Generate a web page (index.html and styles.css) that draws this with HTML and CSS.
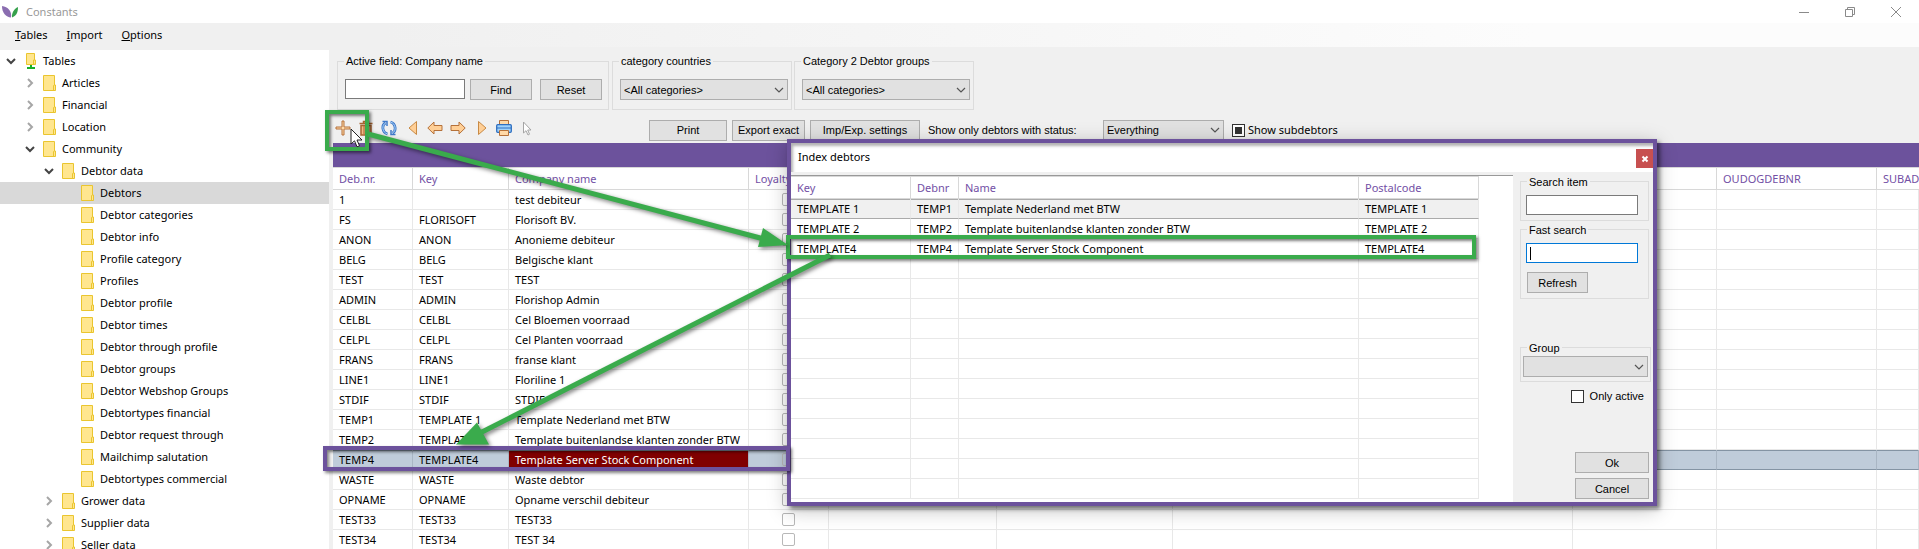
FILE: index.html
```html
<!DOCTYPE html>
<html lang="en">
<head>
<meta charset="utf-8">
<title>Constants</title>
<link rel="stylesheet" href="styles.css">
</head>
<body>
<svg class="defs" aria-hidden="true">
  <symbol id="folder" viewBox="0 0 13 16"><path d="M.5.5h11v9.5h1v5.5H.5z" fill="#ffe68f" stroke="#eac52f"/><path d="M10.5 15v-4.5l1.5-1" fill="none" stroke="#eac52f"/></symbol>
  <symbol id="open" viewBox="0 0 10 10"><path d="M1 3l4 4 4-4" fill="none" stroke="#444" stroke-width="2"/></symbol>
  <symbol id="shut" viewBox="0 0 10 10"><path d="M3 1l4 4-4 4" fill="none" stroke="#a6a6a6" stroke-width="2"/></symbol>
  <symbol id="chev" viewBox="0 0 10 6"><path d="M1 1l4 4 4-4" fill="none" stroke="#555" stroke-width="1.2"/></symbol>
</svg>

<header class="titlebar">
  <svg class="logo" viewBox="0 0 16 12"><path d="M0 0C6 1 10 5 9 11.500C4 11 0 7 0 0z" fill="#8a6db0"/><path d="M16 1c0 6-2 9-6 10.500C9.500 7 12 3 16 1z" fill="#35a04b"/></svg>
  <h1 class="title">Constants</h1>
  <div class="winbtns">
    <button class="winbtn" aria-label="Minimize"><svg viewBox="0 0 10 10"><path d="M0 5.500h10" stroke="#8a8a8a"/></svg></button>
    <button class="winbtn" aria-label="Restore"><svg viewBox="0 0 10 10"><path d="M.5 2.500h7v7h-7zM2.500 2.500v-2h7v7h-2" fill="none" stroke="#8a8a8a"/></svg></button>
    <button class="winbtn" aria-label="Close"><svg viewBox="0 0 10 10"><path d="M0 0l10 10M10 0L0 10" stroke="#8a8a8a"/></svg></button>
  </div>
</header>
<nav class="menubar">
  <button class="menu"><u>T</u>ables</button><button class="menu"><u>I</u>mport</button><button class="menu"><u>O</u>ptions</button>
</nav>

<div class="workspace">
  <aside class="sidebar">
    <ul class="tree">
      <li class="node"><svg class="tw"><use href="#open"/></svg><svg class="fo" viewBox="0 0 13 16"><path d="M2.500.5h8v11h-8z" fill="#ffe68f" stroke="#eac52f"/><path d="M9.500 11V7h2v4.500z" fill="#ffe68f" stroke="#eac52f"/><path d="M7 12v3M3 15h8" stroke="#18b028" stroke-width="2"/></svg>Tables</li>
      <li class="node l1"><svg class="tw"><use href="#shut"/></svg><svg class="fo"><use href="#folder"/></svg>Articles</li>
      <li class="node l1"><svg class="tw"><use href="#shut"/></svg><svg class="fo"><use href="#folder"/></svg>Financial</li>
      <li class="node l1"><svg class="tw"><use href="#shut"/></svg><svg class="fo"><use href="#folder"/></svg>Location</li>
      <li class="node l1"><svg class="tw"><use href="#open"/></svg><svg class="fo"><use href="#folder"/></svg>Community</li>
      <li class="node l2"><svg class="tw"><use href="#open"/></svg><svg class="fo"><use href="#folder"/></svg>Debtor data</li>
      <li class="node l3 current"><svg class="fo"><use href="#folder"/></svg>Debtors</li>
      <li class="node l3"><svg class="fo"><use href="#folder"/></svg>Debtor categories</li>
      <li class="node l3"><svg class="fo"><use href="#folder"/></svg>Debtor info</li>
      <li class="node l3"><svg class="fo"><use href="#folder"/></svg>Profile category</li>
      <li class="node l3"><svg class="fo"><use href="#folder"/></svg>Profiles</li>
      <li class="node l3"><svg class="fo"><use href="#folder"/></svg>Debtor profile</li>
      <li class="node l3"><svg class="fo"><use href="#folder"/></svg>Debtor times</li>
      <li class="node l3"><svg class="fo"><use href="#folder"/></svg>Debtor through profile</li>
      <li class="node l3"><svg class="fo"><use href="#folder"/></svg>Debtor groups</li>
      <li class="node l3"><svg class="fo"><use href="#folder"/></svg>Debtor Webshop Groups</li>
      <li class="node l3"><svg class="fo"><use href="#folder"/></svg>Debtortypes financial</li>
      <li class="node l3"><svg class="fo"><use href="#folder"/></svg>Debtor request through</li>
      <li class="node l3"><svg class="fo"><use href="#folder"/></svg>Mailchimp salutation</li>
      <li class="node l3"><svg class="fo"><use href="#folder"/></svg>Debtortypes commercial</li>
      <li class="node l2"><svg class="tw"><use href="#shut"/></svg><svg class="fo"><use href="#folder"/></svg>Grower data</li>
      <li class="node l2"><svg class="tw"><use href="#shut"/></svg><svg class="fo"><use href="#folder"/></svg>Supplier data</li>
      <li class="node l2"><svg class="tw"><use href="#shut"/></svg><svg class="fo"><use href="#folder"/></svg>Seller data</li>
    </ul>
  </aside>

  <main class="main">
    <div class="filters">
      <fieldset class="box wide"><legend>Active field: Company name</legend>
        <div class="line"><input class="field w120" type="text" aria-label="Company name"><button class="btn w62">Find</button><button class="btn w62 gap3">Reset</button></div>
      </fieldset>
      <fieldset class="box"><legend>category countries</legend>
        <div class="combo w168"><select aria-label="category countries"><option>&lt;All categories&gt;</option></select><svg><use href="#chev"/></svg></div>
      </fieldset>
      <fieldset class="box joined"><legend>Category 2 Debtor groups</legend>
        <div class="combo w168"><select aria-label="Category 2 Debtor groups"><option>&lt;All categories&gt;</option></select><svg><use href="#chev"/></svg></div>
      </fieldset>
    </div>

    <div class="toolbar">
      <div class="icons">
        <button class="ico" aria-label="Add"><svg viewBox="0 0 16 16"><path d="M7 1h2v6h6v2H9v6H7V9H1V7h6z" fill="#ffd9a8" stroke="#b5713a"/></svg></button>
        <button class="ico" aria-label="Delete"><svg viewBox="0 0 16 16"><path d="M1.500 3.500h13M5.500 3V1.500h5V3M3 5.500h10V15H3z" fill="#f3b784" stroke="#a86532" stroke-width="1.500"/><path d="M6 6v8M8 6v8M10 6v8" stroke="#a86532"/></svg></button>
        <button class="ico" aria-label="Refresh"><svg viewBox="0 0 16 16" fill="none"><path d="M6.500 14C1 12.500.5 5 4.500 3M9.500 2C15 3.500 15.500 11 11.500 13" stroke="#3f78c8" stroke-width="2.800"/><path d="M6.500 14C1 12.500.5 5 4.500 3M9.500 2C15 3.500 15.500 11 11.500 13" stroke="#a9d4fa" stroke-width="1"/><path d="M1.500 1.500H6V6M14.500 14.500H10V10" stroke="#3f78c8" stroke-width="1.500"/></svg></button>
        <button class="ico" aria-label="First"><svg viewBox="0 0 16 16"><path d="M12.500 1.500v13L5 8z" fill="#ffcf96" stroke="#c88a45"/></svg></button>
        <button class="ico" aria-label="Previous"><svg viewBox="0 0 16 16"><path d="M.8 8L7 2v3.500h8v5H7V14z" fill="#ffcf96" stroke="#b5713a"/></svg></button>
        <button class="ico" aria-label="Next"><svg viewBox="0 0 16 16"><path d="M15.200 8L9 2v3.500H1v5h8V14z" fill="#ffcf96" stroke="#b5713a"/></svg></button>
        <button class="ico" aria-label="Last"><svg viewBox="0 0 16 16"><path d="M5.500 1.500v13L13 8z" fill="#ffcf96" stroke="#c88a45"/></svg></button>
        <button class="ico" aria-label="Print list"><svg viewBox="0 0 16 16"><path d="M3.500 5V.5h9V5" fill="#ffd9a8" stroke="#b5713a"/><rect x=".7" y="4.700" width="14.600" height="7.600" rx="1" fill="#9fd2fb" stroke="#2f6fc0" stroke-width="1.300"/><path d="M1 8h14" stroke="#2f6fc0"/><path d="M3.500 10.500h9v5h-9z" fill="#ffd9a8" stroke="#b5713a"/></svg></button>
        <button class="ico" aria-label="Select"><svg viewBox="0 0 16 16"><path d="M4.500 2v11l2.500-2.300L9 15l1.500-.8L8.700 10H12z" fill="#fff" stroke="#a5a5a5"/></svg></button>
      </div>
      <div class="actions">
        <button class="btn w78">Print</button><button class="btn w73">Export exact</button><button class="btn w110">Imp/Exp. settings</button>
        <label class="status" for="status">Show only debtors with status:</label>
        <div class="combo w121"><select id="status"><option>Everything</option></select><svg><use href="#chev"/></svg></div>
        <label class="check ui"><input class="tick part" type="checkbox">Show subdebtors</label>
      </div>
    </div>

    <div class="sheet">
      <div class="band"></div>
      <table class="grid">
        <colgroup><col class="c80"><col class="c96"><col class="c240"><col class="c80"><col class="c168"><col class="c176"><col class="c400"><col class="c144"><col class="c160"><col></colgroup>
        <thead><tr><th>Deb.nr.<th>Key<th>Company name<th>Loyalty<th><th><th><th><th>OUDOGDEBNR<th class="last">SUBAD</tr></thead>
        <tbody>
        <tr><td>1<td><td>test debiteur<td><input class="cb" type="checkbox" aria-label="Loyalty"><td><td><td><td><td><td>
        <tr><td>FS<td>FLORISOFT<td>Florisoft BV.<td><input class="cb" type="checkbox" aria-label="Loyalty"><td><td><td><td><td><td>
        <tr><td>ANON<td>ANON<td>Anonieme debiteur<td><input class="cb" type="checkbox" aria-label="Loyalty"><td><td><td><td><td><td>
        <tr><td>BELG<td>BELG<td>Belgische klant<td><input class="cb" type="checkbox" aria-label="Loyalty"><td><td><td><td><td><td>
        <tr><td>TEST<td>TEST<td>TEST<td><input class="cb" type="checkbox" aria-label="Loyalty"><td><td><td><td><td><td>
        <tr><td>ADMIN<td>ADMIN<td>Florishop Admin<td><input class="cb" type="checkbox" aria-label="Loyalty"><td><td><td><td><td><td>
        <tr><td>CELBL<td>CELBL<td>Cel Bloemen voorraad<td><input class="cb" type="checkbox" aria-label="Loyalty"><td><td><td><td><td><td>
        <tr><td>CELPL<td>CELPL<td>Cel Planten voorraad<td><input class="cb" type="checkbox" aria-label="Loyalty"><td><td><td><td><td><td>
        <tr><td>FRANS<td>FRANS<td>franse klant<td><input class="cb" type="checkbox" aria-label="Loyalty"><td><td><td><td><td><td>
        <tr><td>LINE1<td>LINE1<td>Floriline 1<td><input class="cb" type="checkbox" aria-label="Loyalty"><td><td><td><td><td><td>
        <tr><td>STDIF<td>STDIF<td>STDIF<td><input class="cb" type="checkbox" aria-label="Loyalty"><td><td><td><td><td><td>
        <tr><td>TEMP1<td>TEMPLATE 1<td>Template Nederland met BTW<td><input class="cb" type="checkbox" aria-label="Loyalty"><td><td><td><td><td><td>
        <tr><td>TEMP2<td>TEMPLATE 2<td>Template buitenlandse klanten zonder BTW<td><input class="cb" type="checkbox" aria-label="Loyalty"><td><td><td><td><td><td>
        <tr class="selected"><td>TEMP4<td>TEMPLATE4<td class="cell-on">Template Server Stock Component<td><input class="cb" type="checkbox" aria-label="Loyalty"><td><td><td><td><td><td>
        <tr><td>WASTE<td>WASTE<td>Waste debtor<td><input class="cb" type="checkbox" aria-label="Loyalty"><td><td><td><td><td><td>
        <tr><td>OPNAME<td>OPNAME<td>Opname verschil debiteur<td><input class="cb" type="checkbox" aria-label="Loyalty"><td><td><td><td><td><td>
        <tr><td>TEST33<td>TEST33<td>TEST33<td><input class="cb" type="checkbox" aria-label="Loyalty"><td><td><td><td><td><td>
        <tr><td>TEST34<td>TEST34<td>TEST 34<td><input class="cb" type="checkbox" aria-label="Loyalty"><td><td><td><td><td><td>
        </tbody>
      </table>
    </div>
  </main>
</div>

<section class="dialog" role="dialog" aria-labelledby="dlg-title">
  <div class="dlg-head"><h2 class="dlg-title" id="dlg-title">Index debtors</h2><button class="dlg-close" aria-label="Close"><svg viewBox="0 0 8 8"><path d="M1.500 1.500l5 5M6.500 1.500l-5 5" stroke="#fff" stroke-width="2"/></svg></button></div>
  <div class="dlg-body">
    <div class="dlg-list">
      <table class="grid pick">
        <colgroup><col class="c120"><col class="c48"><col class="c400"><col class="c120"></colgroup>
        <thead><tr><th>Key<th>Debnr<th>Name<th>Postalcode</tr></thead>
        <tbody>
        <tr class="hot"><td>TEMPLATE 1<td>TEMP1<td>Template Nederland met BTW<td>TEMPLATE 1
        <tr><td>TEMPLATE 2<td>TEMP2<td>Template buitenlandse klanten zonder BTW<td>TEMPLATE 2
        <tr><td>TEMPLATE4<td>TEMP4<td>Template Server Stock Component<td>TEMPLATE4
        <tr><td><td><td><td>
        <tr><td><td><td><td>
        <tr><td><td><td><td>
        <tr><td><td><td><td>
        <tr><td><td><td><td>
        <tr><td><td><td><td>
        <tr><td><td><td><td>
        <tr><td><td><td><td>
        <tr><td><td><td><td>
        <tr><td><td><td><td>
        <tr><td><td><td><td>
        <tr><td><td><td><td>
        </tbody>
      </table>
    </div>
    <div class="dlg-side">
      <fieldset class="box small"><legend>Search item</legend><input class="field w112" type="text" aria-label="Search item"></fieldset>
      <fieldset class="box small"><legend>Fast search</legend>
        <div class="field w112 focus"><span class="caret"></span><input class="bare" type="text" aria-label="Fast search"></div>
        <button class="btn refresh">Refresh</button></fieldset>
      <fieldset class="box group"><legend>Group</legend><div class="combo"><select aria-label="Group"><option></option></select><svg><use href="#chev"/></svg></div></fieldset>
      <label class="check only"><input class="tick" type="checkbox">Only active</label>
      <div class="answers"><button class="btn w74">Ok</button><button class="btn w74">Cancel</button></div>
    </div>
  </div>
</section>

<div class="mark mark-add"></div>
<div class="mark mark-row"></div>
<div class="mark mark-selected"></div>
<svg class="arrows" aria-hidden="true">
  <g stroke="#3aab4c" stroke-width="5" fill="#3aab4c">
    <path d="M368 134L764 239"/><path d="M788 245l-25-17-5 19z" stroke="none"/>
    <path d="M830 255L480 433"/><path d="M456 444.500l21-22 12 22z" stroke="none"/>
  </g>
</svg>
<svg class="cursor" viewBox="0 0 13 20" aria-hidden="true"><path d="M1 1v15l3.500-3.200 2.500 6 2.500-1-2.500-5.800H12z" fill="#fff" stroke="#222"/></svg>
</body>
</html>
```

FILE: styles.css
```css
* { box-sizing: border-box; }
html, body { height: 100%; }
body {
  margin: 0;
  display: flex;
  flex-direction: column;
  overflow: hidden;
  position: relative;
  background: #f0f0f0;
  color: #000;
  font: 11px/16px "Noto Sans", "Open Sans", sans-serif;
}
.defs { position: absolute; width: 0; height: 0; }
button, input, select { font: inherit; color: inherit; margin: 0; }
h1, h2 { margin: 0; font-weight: 400; font-size: 11px; }

/* Window chrome */
.titlebar { display: flex; align-items: center; height: 23px; flex: none; background: #fff; padding-left: 2px; }
.logo { width: 16px; height: 12px; }
.title { color: #999; padding-left: 8px; flex: 1; }
.winbtns { display: flex; }
.winbtn { width: 46px; height: 20px; border: 0; background: none; padding: 0 18px; display: flex; align-items: center; }
.winbtn svg { width: 10px; height: 10px; display: block; }
.menubar { display: flex; gap: 19px; height: 24px; flex: none; padding-left: 15px; background: linear-gradient(90deg, #f0f0f0 20%, #fcfcfc 80%); }
.menu { border: 0; background: none; padding: 0; }

/* Tree */
.workspace { display: flex; flex: 1; min-height: 0; padding-top: 3px; }
.sidebar { width: 329px; flex: none; background: #fff; overflow: hidden; }
.tree { list-style: none; margin: 0; padding: 0; }
.node { display: flex; align-items: center; height: 22px; padding-left: 6px; white-space: nowrap; }
.l1 { padding-left: 25px; }
.l2 { padding-left: 44px; }
.l3 { padding-left: 81px; }
.current { background: #d9d9d9; }
.tw { width: 10px; height: 10px; margin-right: 8px; }
.fo { width: 13px; height: 16px; margin-right: 6px; }

/* Filters */
.main { flex: 1; min-width: 0; display: flex; flex-direction: column; padding-left: 4px; }
.filters, .toolbar, .dlg-side { font-family: "Liberation Sans", Arial, sans-serif; }
.filters { display: flex; gap: 3px; padding: 3px 0 0 4px; }
.box { border: 1px solid #dcdcdc; margin: 0; padding: 10px 3px 9px 7px; min-width: 0; }
.box.wide { padding-right: 6px; }
.box legend { padding: 0 2px; margin-left: -1px; height: 16px; }
.box.joined { margin-left: -1px; }
.line { display: flex; gap: 5px; }
.gap3 { margin-left: 3px; }
.field { display: block; height: 20px; border: 1px solid #7a7a7a; background: #fff; padding: 0 3px; outline: 0; }
.btn { height: 21px; border: 1px solid #adadad; background: #e1e1e1; padding: 0; white-space: nowrap; }
.combo { display: grid; align-items: center; height: 21px; }
.combo select, .combo svg { grid-area: 1 / 1; }
.combo select { appearance: none; width: 100%; height: 21px; border: 1px solid #adadad; border-radius: 0; background: #e1e1e1; padding: 0 20px 0 3px; }
.combo svg { width: 10px; height: 6px; justify-self: end; margin-right: 4px; pointer-events: none; }
.w62 { width: 62px; }
.w73 { width: 73px; }
.w74 { width: 74px; }
.w78 { width: 78px; }
.w110 { width: 110px; }
.w112 { width: 112px; }
.w120 { width: 120px; }
.w121 { width: 121px; }
.w168 { width: 168px; }

/* Toolbar */
.toolbar { display: flex; height: 33px; flex: none; padding-left: 2px; }
.icons { display: flex; gap: 7px; width: 314px; flex: none; align-items: center; padding-top: 3px; }
.ico { width: 16px; height: 16px; border: 0; background: none; padding: 0; }
.ico svg { display: block; width: 16px; height: 16px; }
.actions { display: flex; align-items: center; gap: 5px; padding-top: 7px; }
.status { width: 173px; padding-left: 3px; white-space: nowrap; }
.check { display: flex; align-items: center; gap: 3px; white-space: nowrap; padding-left: 3px; }
.ui { font-family: "Noto Sans", "Open Sans", sans-serif; }
.tick { appearance: none; width: 13px; height: 13px; border: 1px solid #333; background: #fff; }
.part { background: #333; box-shadow: inset 0 0 0 2px #fff; }

/* Grids */
.sheet { flex: 1; min-height: 0; overflow: hidden; background: #fff; }
.band { height: 24px; background: #6c529c; }
.grid { table-layout: fixed; width: 100%; border-collapse: separate; border-spacing: 0; }
.grid th { height: 23px; padding: 0 6px; text-align: left; font-weight: 400; color: #7350a5; border: 1px solid #d8d8d8; border-left: 0; white-space: nowrap; overflow: hidden; }
.grid .last { padding-right: 0; border-right: 0; }
.grid td { height: 20px; padding: 0 6px; border: 1px solid #e8e8e8; border-left: 0; border-top: 0; white-space: nowrap; overflow: hidden; }
.c48 { width: 48px; }
.c80 { width: 80px; }
.c96 { width: 96px; }
.c120 { width: 120px; }
.c144 { width: 144px; }
.c160 { width: 160px; }
.c168 { width: 168px; }
.c176 { width: 176px; }
.c240 { width: 240px; }
.c400 { width: 400px; }
.cb { appearance: none; display: block; width: 13px; height: 13px; margin: 0 auto; border: 1px solid #b8b8b8; border-radius: 2px; background: #fff; }
.selected td { background: #bfccda; border-color: #8494a4; border-right-color: #a9b6c4; box-shadow: inset 0 1px #8494a4; }
.selected .cell-on { background: #800000; color: #fff; }
.selected .cb { background: none; }

/* Debtor picker */
.dialog {
  position: absolute; left: 787px; top: 139px; width: 870px;
  border: 4px solid #6c529c; background: #f0f0f0;
  box-shadow: 3px 3px 4px rgba(0,0,0,.45), 0 4px 18px rgba(0,0,0,.25);
}
.dlg-head { display: flex; justify-content: space-between; height: 29px; padding: 6px 0 0 7px; background: #fff; box-shadow: inset 2px 3px 3px rgba(0,0,0,.3); }
.dlg-title { line-height: 16px; }
.dlg-close { width: 17px; height: 19px; border: 0; padding: 0; background: #c75050; display: grid; place-items: center; }
.dlg-close svg { width: 8px; height: 8px; }
.dlg-body { display: flex; padding-top: 3px; }
.dlg-list { flex: 1; background: #fff; border-top: 1px solid #999; padding-bottom: 3px; }
.pick { width: 688px; }
.pick .hot td { background: #f0f0f0; border-bottom-color: #aaa; box-shadow: inset 0 1px #aaa; }
.dlg-side { width: 140px; padding: 0 4px 0 7px; display: flex; flex-direction: column; }
.dlg-side .box legend { margin-left: 1px; height: 12px; line-height: 14px; }
.dlg-side .small { padding: 8px 5px 5px 5px; margin-bottom: 2px; }
.focus { border-color: #0078d7; display: flex; align-items: center; }
.caret { width: 1px; height: 13px; background: #000; }
.bare { border: 0; padding: 0; width: 100%; outline: 0; background: none; }
.refresh { width: 61px; margin: 9px 0 0 1px; display: block; }
.dlg-side .group { margin: 40px -2px 0 0; padding: 3px 2px 4px; }
.dlg-side .group legend { margin-left: 4px; }
.only { align-self: flex-end; padding: 6px 5px 0 0; gap: 6px; }
.answers { display: flex; flex-direction: column; gap: 5px; align-items: flex-end; margin-top: auto; padding-bottom: 3px; }

/* Call-outs */
.mark { position: absolute; border: 4px solid #3aab4c; box-shadow: 2px 2px 3px rgba(0,0,0,.5), inset 2px 2px 3px rgba(0,0,0,.5); pointer-events: none; }
.mark-add { left: 325px; top: 110px; width: 44px; height: 41px; }
.mark-row { left: 786px; top: 235px; width: 690px; height: 24px; }
.mark-selected { left: 323px; top: 446px; width: 467px; height: 25px; border-color: #6c529c; }
.arrows { position: absolute; left: 0; top: 0; width: 100%; height: 100%; pointer-events: none; filter: drop-shadow(2px 2px 2px rgba(0,0,0,.5)); }
.cursor { position: absolute; left: 350px; top: 128px; width: 13px; height: 20px; }
```
